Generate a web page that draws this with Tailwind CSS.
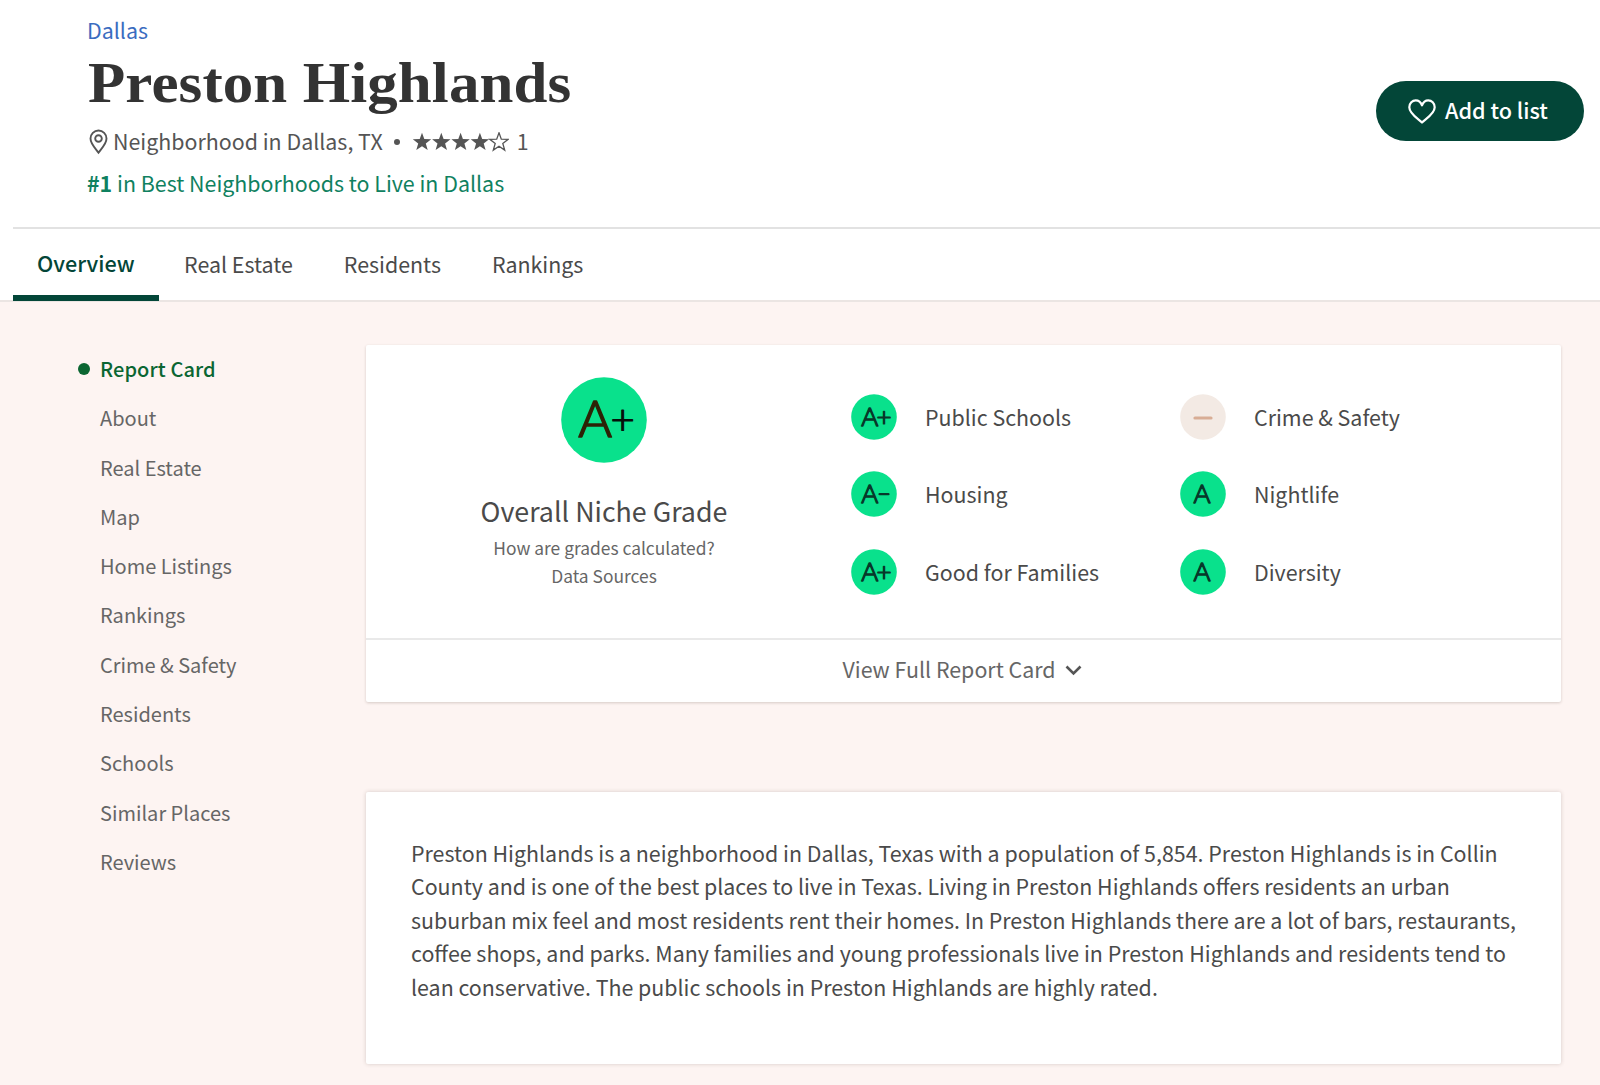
<!DOCTYPE html>
<html lang="en">
<head>
  <meta charset="UTF-8">
  <meta name="viewport" content="width=device-width, initial-scale=1.0">
  <title>Preston Highlands</title>
  <script src="https://cdn.jsdelivr.net/npm/@tailwindcss/browser@4"></script>
</head>
<body class="w-[1600px] h-[1085px] overflow-hidden bg-[#fdf4f2] font-['Noto_Sans_CJK_SC','Source_Sans_Pro',sans-serif] text-[21.4px] leading-8 text-[#4a4a4a]">

  <header class="bg-white">
    <div class="flex justify-between pt-[14px] pl-[87px] pr-4">
      <div>
        <a href="#" class="block w-fit text-[#3a6cc0]">Dallas</a>
        <h1 class="mt-[5px] ml-px w-fit origin-left scale-x-[1.06] font-['Liberation_Serif',serif] font-bold text-[57.5px] leading-[64px] tracking-[0.1px] text-[#333]">Preston Highlands</h1>
        <div class="mt-[10px] flex items-center text-[#555]">
          <svg class="ml-0.5 mr-[5px] w-[19px] h-[27px]" viewBox="0 0 19 27" fill="none" stroke="currentColor" stroke-width="1.9">
            <path d="M9.5 24.600C7 21 1.500 16 1.500 10.500a8 8 0 0 1 16 0c0 5.500-5.500 10.500-8 14.100z"/>
            <circle cx="9.500" cy="10.500" r="3.300"/>
          </svg>
          <span>Neighborhood in Dallas, TX</span>
          <span class="ml-[11px] mr-[12px] mt-[2px] w-1.5 h-1.5 rounded-full bg-[#555]"></span>
          <svg class="mt-px w-[97px] h-[20px]" viewBox="0 0 97 20" fill="#555">
            <defs><path id="star" d="M10 .8l2.300 6.300 6.900.2-5.400 4.200 1.900 6.600L10 14.200l-5.700 3.900 1.900-6.600L.8 7.300l6.900-.2z"/></defs>
            <use href="#star"/>
            <use href="#star" x="19.300"/>
            <use href="#star" x="38.600"/>
            <use href="#star" x="57.900"/>
            <use href="#star" x="77" fill="none" stroke="#555" stroke-width="1.300"/>
          </svg>
          <span class="ml-[8px]">1</span>
        </div>
        <p class="mt-[10px] w-fit text-[#0f8160]"><b>#1</b> in Best Neighborhoods to Live in Dallas</p>
      </div>
      <button class="mt-[67px] flex h-[60px] w-[208px] items-center rounded-full bg-[#034638] pl-8 pb-[2px] text-[21.600px] font-medium text-white">
        <svg class="mr-[9px] mt-[3px] w-[28px] h-[25px]" viewBox="0 0 28 25" fill="none" stroke="currentColor" stroke-width="2.200" stroke-linejoin="round">
          <path d="M14 23.500C10.500 20 1.300 14.800 1.300 8.200 1.300 4 4.400 1.300 7.700 1.300c3 0 5.200 2 6.300 5 1.100-3 3.300-5 6.300-5 3.300 0 6.400 2.700 6.400 6.900 0 6.600-9.200 11.800-12.700 15.300z"/>
        </svg>
        <span>Add to list</span>
      </button>
    </div>

    <nav class="mt-7 ml-[13px] flex h-[73px] border-t-2 border-[#e2e2e2]">
      <a href="#" class="h-[72px] border-b-[6px] border-[#034638] px-6 pt-[18px] text-[21.600px] font-medium text-[#034638]">Overview</a>
      <a href="#" class="px-[25.500px] pt-[19px]">Real Estate</a>
      <a href="#" class="px-[25.500px] pt-[19px]">Residents</a>
      <a href="#" class="px-[25.500px] pt-[19px]">Rankings</a>
    </nav>
  </header>

  <main class="flex border-t-2 border-[#ebe5e3]">
    <aside class="w-[366px] pt-[42px] pl-[78px] text-[20px] leading-[49.300px] text-[#666]">
      <a href="#" class="flex items-center font-medium tracking-[0.1px] text-[#0b6632]"><i class="mt-px mr-[10px] size-3 rounded-full bg-[#0b6632]"></i>Report Card</a>
      <ul class="pl-[22px]">
        <li>About</li>
        <li>Real Estate</li>
        <li>Map</li>
        <li>Home Listings</li>
        <li>Rankings</li>
        <li>Crime &amp; Safety</li>
        <li>Residents</li>
        <li>Schools</li>
        <li>Similar Places</li>
        <li>Reviews</li>
      </ul>
    </aside>

    <div class="w-[1195px] pt-[43px]">
      <section class="h-[357px] rounded-xs bg-white shadow-[0_1px_3px_rgba(60,40,30,0.2)]">
        <div class="flex h-[293px]">
          <div class="flex w-[476px] flex-col items-center pt-8">
            <svg class="size-[86px]" viewBox="0 0 86 86">
              <circle cx="43" cy="43" r="42.800" fill="#09e18c"/>
              <g font-family="Lato" font-weight="300" stroke-linejoin="round">
                <text x="17.200" y="60" font-size="51.500" fill="#2d2306" stroke="#2d2306" stroke-width="1.700">A</text>
                <text x="49.500" y="56.500" font-size="42" fill="#06110b" stroke="#06110b" stroke-width="1.200">+</text>
              </g>
            </svg>
            <h2 class="mt-[27px] text-[26.800px] leading-[42px]">Overall Niche Grade</h2>
            <a href="#" class="mt-[2px] text-[17.400px] leading-[28.300px] text-[#666]">How are grades calculated?</a>
            <a href="#" class="text-[17.400px] leading-[28.300px] text-[#666]">Data Sources</a>
          </div>

          <ul class="grid h-fit grid-cols-[329px_329px] gap-y-[31.700px] pt-[48.500px] pl-[9px]">
            <li class="flex items-center">
              <svg class="mr-[28px] size-[46px]" viewBox="0 0 46 46"><circle cx="23" cy="23" r="22.800" fill="#09e18c"/><g font-family="Lato" font-weight="300" fill="#07382a" stroke="#07382a" stroke-width="1.300" stroke-linejoin="round"><text x="10.200" y="32" font-size="26">A</text><text x="25.500" y="32" font-size="26">+</text></g></svg>
              <span>Public Schools</span>
            </li>
            <li class="flex items-center">
              <svg class="mr-[28px] size-[46px]" viewBox="0 0 46 46"><circle cx="23" cy="23" r="22.800" fill="#f3eae4"/><path d="M15 24h16" stroke="#d8ad95" stroke-width="3.200" stroke-linecap="round"/></svg>
              <span>Crime &amp; Safety</span>
            </li>
            <li class="flex items-center">
              <svg class="mr-[28px] size-[46px]" viewBox="0 0 46 46"><circle cx="23" cy="23" r="22.800" fill="#09e18c"/><text x="10.200" y="32" font-family="Lato" font-weight="300" font-size="26" fill="#07382a" stroke="#07382a" stroke-width="1.300" stroke-linejoin="round">A</text><path d="M28.500 23.200h9" stroke="#07382a" stroke-width="2.200" stroke-linecap="round"/></svg>
              <span>Housing</span>
            </li>
            <li class="flex items-center">
              <svg class="mr-[28px] size-[46px]" viewBox="0 0 46 46"><circle cx="23" cy="23" r="22.800" fill="#09e18c"/><text x="13.500" y="32" font-family="Lato" font-weight="300" font-size="26" fill="#07382a" stroke="#07382a" stroke-width="1.300" stroke-linejoin="round">A</text></svg>
              <span>Nightlife</span>
            </li>
            <li class="flex items-center">
              <svg class="mr-[28px] size-[46px]" viewBox="0 0 46 46"><circle cx="23" cy="23" r="22.800" fill="#09e18c"/><g font-family="Lato" font-weight="300" fill="#07382a" stroke="#07382a" stroke-width="1.300" stroke-linejoin="round"><text x="10.200" y="32" font-size="26">A</text><text x="25.500" y="32" font-size="26">+</text></g></svg>
              <span>Good for Families</span>
            </li>
            <li class="flex items-center">
              <svg class="mr-[28px] size-[46px]" viewBox="0 0 46 46"><circle cx="23" cy="23" r="22.800" fill="#09e18c"/><text x="13.500" y="32" font-family="Lato" font-weight="300" font-size="26" fill="#07382a" stroke="#07382a" stroke-width="1.300" stroke-linejoin="round">A</text></svg>
              <span>Diversity</span>
            </li>
          </ul>
        </div>
        <a href="#" class="flex h-[64px] items-center justify-center border-t-2 border-[#e9e9e9] pb-[5px] text-[#666]">
          View Full Report Card
          <svg class="ml-[9px] mr-[3px] mt-[3px] w-[17px] h-[11px]" viewBox="0 0 17 11" fill="none" stroke="#555" stroke-width="2.600"><path d="M1.500 1.500l7 7 7-7"/></svg>
        </a>
      </section>

      <section class="mt-[90px] h-[272px] rounded-xs bg-white pt-[44px] pl-[45px] leading-[33.400px] shadow-[0_0_4px_rgba(60,40,30,0.2)]">
        <p class="whitespace-nowrap">
          Preston Highlands is a neighborhood in Dallas, Texas with a population of 5,854. Preston Highlands is in Collin<br>
          County and is one of the best places to live in Texas. Living in Preston Highlands offers residents an urban<br>
          suburban mix feel and most residents rent their homes. In Preston Highlands there are a lot of bars, restaurants,<br>
          coffee shops, and parks. Many families and young professionals live in Preston Highlands and residents tend to<br>
          lean conservative. The public schools in Preston Highlands are highly rated.
        </p>
      </section>
    </div>
  </main>

</body>
</html>
